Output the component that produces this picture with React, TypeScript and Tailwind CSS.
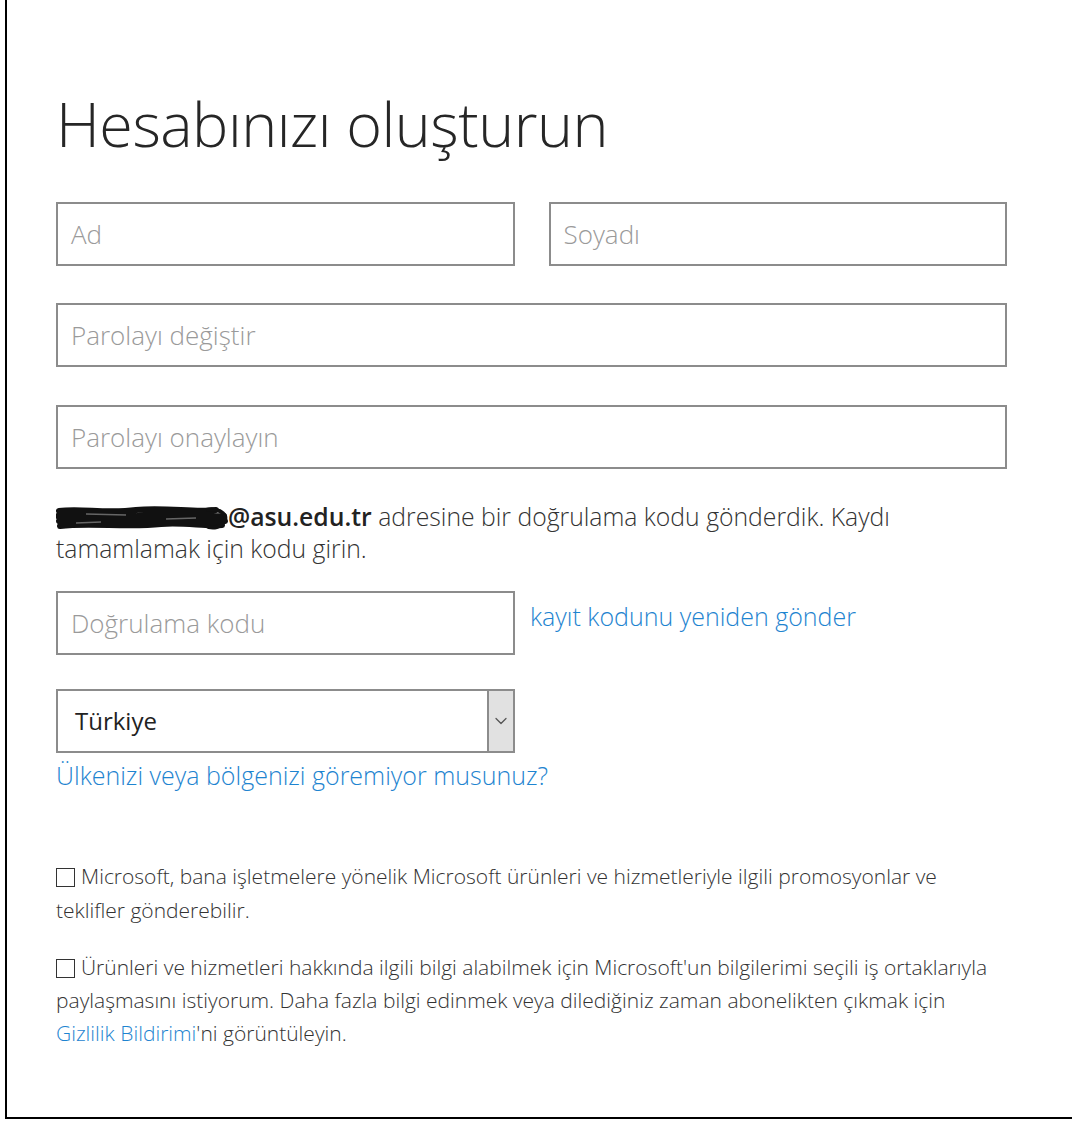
import { ChevronDown } from 'lucide-react';

const font = { fontFamily: '"Open Sans", "Noto Sans", sans-serif' };

interface FieldProps {
  placeholder: string;
  className?: string;
}
const Field = ({ placeholder, className = '' }: FieldProps) => (
  <div
    className={`flex h-[64px] items-center border-2 border-[#8c8c8c] bg-white px-[13px] text-[26px] font-light text-[#9a9a9a] ${className}`}
  >
    {placeholder}
  </div>
);

// scribbled-over part of the address
const Redacted = () => (
  <svg width="172" height="26" viewBox="0 0 172 26" className="inline-block align-[-6px]">
    <path
      d="M3 5 C25 2 50 8 80 4 C110 1 140 7 160 4 M2 10 C30 7 60 13 95 9 C125 6 150 12 168 10 M3 15 C32 12 62 18 98 14 C128 11 152 17 169 15 M4 20 C35 16 70 22 105 18 C130 16 150 21 166 19"
      stroke="#111"
      strokeWidth="6"
      fill="none"
      strokeLinecap="round"
    />
    <path d="M30 8 L70 9 M110 13 L140 12 M20 17 L45 16" stroke="#666" strokeWidth="1.5" fill="none" />
    <path
      d="M150 4 C162 1 171 8 169 14 C167 21 156 24 149 19"
      stroke="#111"
      strokeWidth="4"
      fill="none"
    />
  </svg>
);

const Checkbox = () => (
  <span className="mr-[6px] inline-block h-[19px] w-[19px] border-[1.5px] border-[#333] bg-white align-[-3px]" />
);

const App = () => {
  return (
    <div className="min-h-screen bg-white" style={font}>
      <div className="ml-[5px] h-[1119px] border-b-2 border-l-2 border-black pl-[49px] pt-[86px]">
        <div className="w-[951px]">
          <h1 className="text-[61px] font-light leading-[76px] tracking-[-0.5px] text-[#262626]">
            Hesabınızı oluşturun
          </h1>

          <div className="mt-[40px] flex gap-[34px]">
            <Field placeholder="Ad" className="flex-1" />
            <Field placeholder="Soyadı" className="flex-1" />
          </div>
          <Field placeholder="Parolayı değiştir" className="mt-[37px]" />
          <Field placeholder="Parolayı onaylayın" className="mt-[38px]" />

          <p className="mt-[32px] text-[24.75px] font-light leading-[32px] text-[#333]">
            <Redacted />
            <span className="font-semibold text-[#222]">@asu.edu.tr</span> adresine bir doğrulama kodu
            gönderdik. Kaydı
            <br />
            tamamlamak için kodu girin.
          </p>

          <div className="mt-[26px] flex items-center gap-[15px]">
            <Field placeholder="Doğrulama kodu" className="w-[459px]" />
            <a className="-mt-[12px] text-[25px] font-light text-[#1e84d0]">kayıt kodunu yeniden gönder</a>
          </div>

          <div className="mt-[34px] flex h-[64px] w-[459px] items-stretch border-2 border-[#8c8c8c] bg-white">
            <div className="flex flex-1 items-center pl-[17px] text-[24px] text-[#222]">Türkiye</div>
            <div className="flex w-[26px] items-center justify-center border-l-2 border-[#8c8c8c] bg-[#e1e1e1]">
              <ChevronDown size={20} strokeWidth={1.5} className="text-[#555]" />
            </div>
          </div>
          <a className="mt-[6px] block text-[25px] font-light leading-[32px] text-[#1e84d0]">
            Ülkenizi veya bölgenizi göremiyor musunuz?
          </a>

          <p className="mt-[68px] text-[21px] font-light leading-[34px] text-[#333]">
            <Checkbox />
            Microsoft, bana işletmelere yönelik Microsoft ürünleri ve hizmetleriyle ilgili promosyonlar ve
            <br />
            teklifler gönderebilir.
          </p>
          <p className="mt-[24px] text-[21px] font-light leading-[33px] text-[#333]">
            <Checkbox />
            Ürünleri ve hizmetleri hakkında ilgili bilgi alabilmek için Microsoft'un bilgilerimi seçili iş
            ortaklarıyla
            <br />
            paylaşmasını istiyorum. Daha fazla bilgi edinmek veya dilediğiniz zaman abonelikten çıkmak için
            <br />
            <a className="text-[#1e84d0]">Gizlilik Bildirimi</a>'ni görüntüleyin.
          </p>
        </div>
      </div>
    </div>
  );
};

export default App;
